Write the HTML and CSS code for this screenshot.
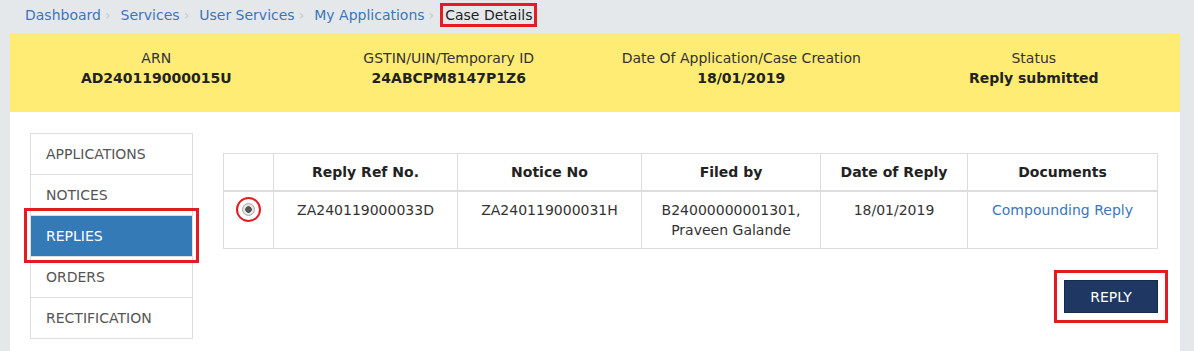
FILE: index.html
```html
<!DOCTYPE html>
<html lang="en">
<head>
    <meta charset="UTF-8">
    <title>Case Details</title>
    <link rel="stylesheet" href="styles.css">
</head>
<body>
    <ol class="breadcrumb">
        <li><a href="#">Dashboard</a></li>
        <li><a href="#">Services</a></li>
        <li><a href="#">User Services</a></li>
        <li><a href="#">My Applications</a></li>
        <li class="current"><span class="mark">Case Details</span></li>
    </ol>
    <div class="page">
        <div class="case-info">
            <div class="info-col">
                <p class="label">ARN</p>
                <p class="value">AD240119000015U</p>
            </div>
            <div class="info-col">
                <p class="label">GSTIN/UIN/Temporary ID</p>
                <p class="value">24ABCPM8147P1Z6</p>
            </div>
            <div class="info-col">
                <p class="label">Date Of Application/Case Creation</p>
                <p class="value">18/01/2019</p>
            </div>
            <div class="info-col">
                <p class="label">Status</p>
                <p class="value">Reply submitted</p>
            </div>
        </div>
        <div class="content">
            <ul class="side-nav">
                <li><a href="#">APPLICATIONS</a></li>
                <li><a href="#">NOTICES</a></li>
                <li class="active"><a href="#">REPLIES</a></li>
                <li><a href="#">ORDERS</a></li>
                <li><a href="#">RECTIFICATION</a></li>
            </ul>
            <div class="main">
                <table class="replies">
                    <thead>
                        <tr>
                            <th class="col-sel"></th>
                            <th class="col-ref">Reply Ref No.</th>
                            <th class="col-notice">Notice No</th>
                            <th class="col-filed">Filed by</th>
                            <th class="col-date">Date of Reply</th>
                            <th>Documents</th>
                        </tr>
                    </thead>
                    <tbody>
                        <tr>
                            <td><span class="radio-mark"><span class="radio"></span></span></td>
                            <td>ZA240119000033D</td>
                            <td>ZA240119000031H</td>
                            <td>B24000000001301,<br>Praveen Galande</td>
                            <td>18/01/2019</td>
                            <td><a href="#">Compounding Reply</a></td>
                        </tr>
                    </tbody>
                </table>
                <div class="actions">
                    <button class="btn-reply">REPLY</button>
                </div>
            </div>
        </div>
    </div>
</body>
</html>
```

FILE: styles.css
```css
body {
    margin: 0;
    background-color: #e5e8eb;
    font-family: "DejaVu Sans", Verdana, sans-serif;
    font-size: 14px;
    color: #333;
}
a {
    color: #3c76b9;
    text-decoration: none;
}
.breadcrumb {
    list-style: none;
    margin: 0;
    padding: 5px 25px 0;
    height: 28px;
    display: flex;
    align-items: flex-start;
    line-height: 20px;
}
.breadcrumb li + li::before {
    content: "\203A";
    color: #c4c8cc;
    padding: 0 10px 0 4px;
}
.breadcrumb .mark {
    outline: 3px solid #e31b23;
    outline-offset: 1px;
    padding: 0 1px;
    color: #222;
}
.page {
    margin-left: 10px;
    width: 1170px;
}
.case-info {
    background-color: #ffec74;
    display: grid;
    grid-template-columns: repeat(4, 1fr);
    padding: 15px 0 24px;
    text-align: center;
    line-height: 20px;
}
.case-info p {
    margin: 0;
}
.case-info .value {
    font-weight: bold;
    color: #222;
}
.content {
    background-color: #fff;
    display: flex;
    align-items: flex-start;
    gap: 30px;
    padding: 21px 22px 13px 20px;
}
.side-nav {
    list-style: none;
    margin: 0;
    padding: 0;
    width: 161px;
    border: 1px solid #ddd;
    flex-shrink: 0;
}
.side-nav li + li {
    border-top: 1px solid #ddd;
}
.side-nav a {
    display: block;
    padding: 10px 15px;
    line-height: 20px;
    color: #555;
}
.side-nav li.active {
    outline: 3px solid #e31b23;
    outline-offset: 4px;
}
.side-nav li.active a {
    background-color: #337ab7;
    color: #fff;
}
.main {
    flex: 1;
    padding-top: 20px;
}
.replies {
    width: 935px;
    border-collapse: collapse;
    border: 1px solid #ddd;
    line-height: 20px;
}
.replies th,
.replies td {
    border: 1px solid #ddd;
    text-align: center;
}
.replies th {
    font-weight: bold;
    color: #222;
    padding: 8px;
    border-bottom-width: 2px;
}
.replies td {
    padding: 8px;
    height: 40px;
    vertical-align: top;
}
.col-sel { width: 33px; }
.col-ref { width: 167px; }
.col-notice { width: 167px; }
.col-filed { width: 162px; }
.col-date { width: 130px; }
.radio-mark {
    display: inline-flex;
    width: 21px;
    height: 21px;
    border: 2px solid #e31b23;
    border-radius: 50%;
    align-items: center;
    justify-content: center;
    vertical-align: middle;
    margin-top: -3px;
}
.radio {
    width: 11px;
    height: 11px;
    border-radius: 50%;
    border: 1px solid #a9a9a9;
    background: radial-gradient(circle, #555 0 3px, #e4e4e4 3.5px);
}
.actions {
    display: flex;
    justify-content: flex-end;
    padding-top: 31px;
    width: 935px;
}
.btn-reply {
    width: 94px;
    height: 33px;
    background-color: #1f3763;
    color: #fff;
    border: 1px solid #172a4d;
    font-family: inherit;
    font-size: 14px;
    outline: 3px solid #e31b23;
    outline-offset: 7px;
}
```
